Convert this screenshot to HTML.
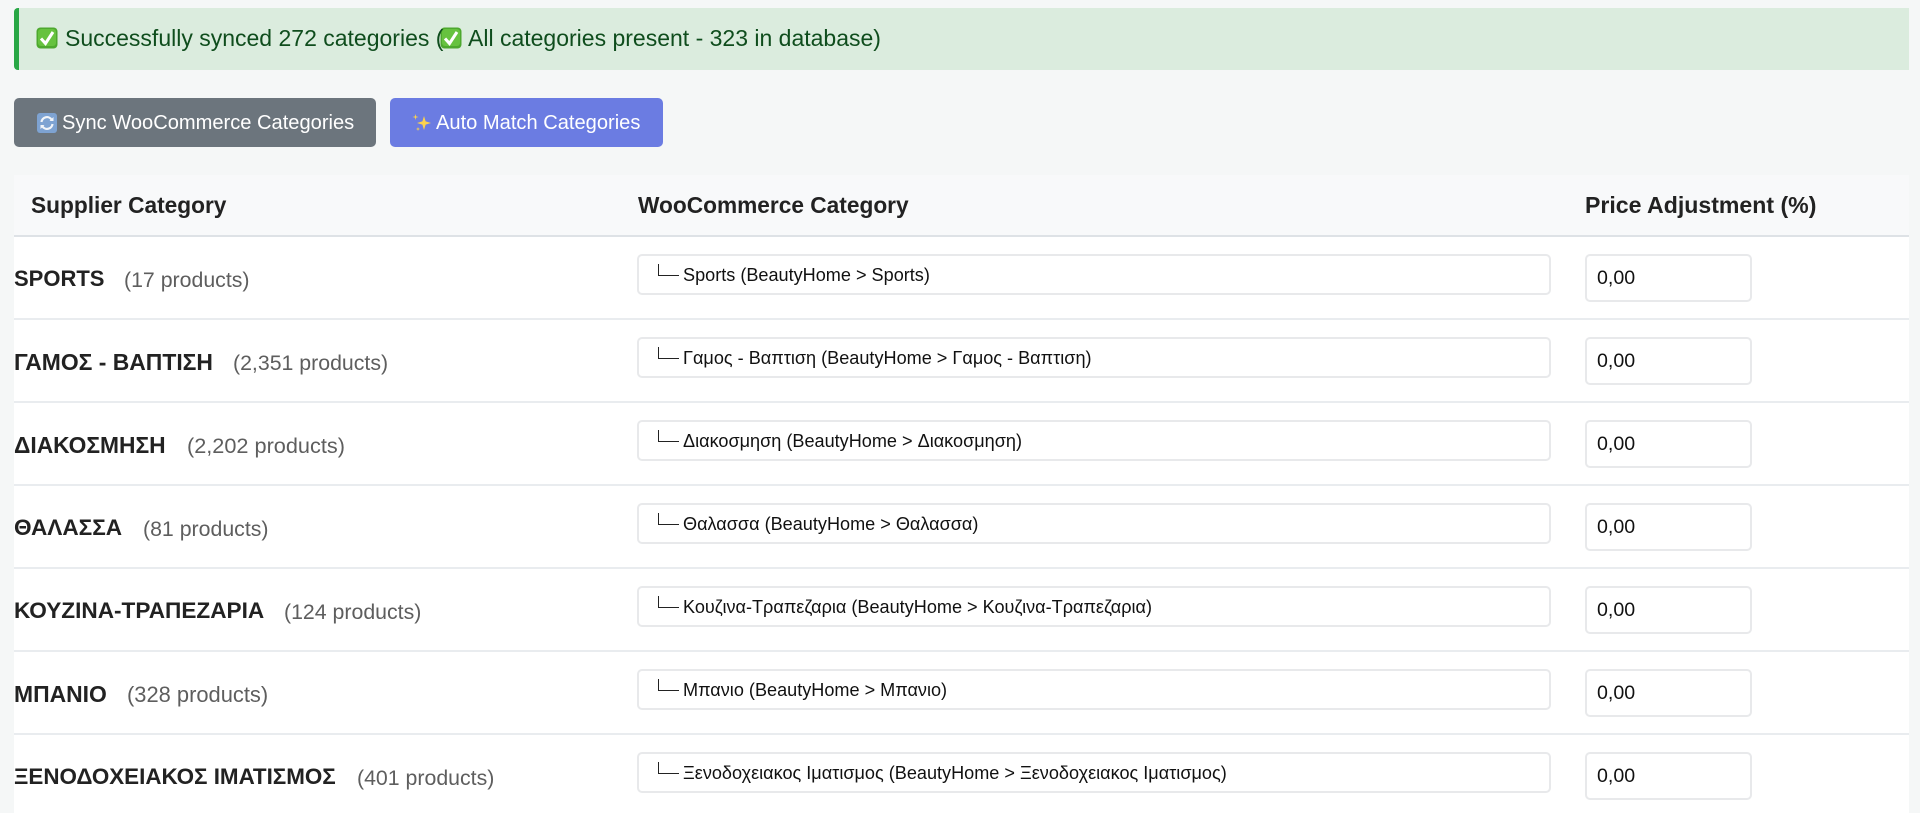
<!DOCTYPE html>
<html><head><meta charset="utf-8"><style>
html,body{margin:0;padding:0;width:1920px;height:813px;overflow:hidden;background:#f5f7f7;font-family:"Liberation Sans",sans-serif}
#page{position:absolute;left:0;top:0;width:1920px;height:813px;filter:blur(.35px)}
.a{position:absolute;white-space:nowrap}
#alert{left:14px;top:8px;width:1895px;height:62px;background:#dbecde;border-radius:4px 0 0 4px}
#bar{left:14px;top:8px;width:5px;height:62px;background:#28a745;border-radius:4px 0 0 4px}
.m{top:25px;font-size:23px;line-height:27px;color:#0f4d1d}
.btn{top:99px;height:49px;border-radius:5px;color:#fff;font-size:20.1px;line-height:49px}
.bg{top:98px}
#table{left:14px;top:175px;width:1895px;height:638px;background:#fff}
#head{left:14px;top:175px;width:1895px;height:60px;background:#f8f9fa;border-bottom:2px solid #dee2e6}
.h{top:192px;font-size:22.7px;line-height:26px;font-weight:bold;color:#222}
.row{left:14px;width:1895px;height:83px;border-bottom:2px solid #e9ecef;box-sizing:border-box}
.n{left:14px;font-size:22.6px;line-height:26px;font-weight:bold;color:#222}
.c{font-size:21.3px;line-height:26px;color:#5e5e5e}
.s{left:637px;width:910px;height:37px;border:2px solid #e8e9eb;border-radius:5px;background:#fff}
.st{left:683px;font-size:18.1px;line-height:22px;color:#111}
.tr{left:657.500px;width:21px;height:12px;border-left:1.5px solid #222;border-bottom:1.5px solid #222;box-sizing:border-box}
.i{left:1585px;width:163px;height:44px;border:2px solid #e8e9eb;border-radius:5px;background:#fff}
.v{left:1597px;font-size:19.6px;line-height:24px;color:#111}
svg{position:absolute}
</style></head><body><div id="page">
<div class="a" id="alert"></div><div class="a" id="bar"></div>
<svg style="left:36px;top:27px" width="22" height="22" viewBox="0 0 22 22"><rect x="0.5" y="0.5" width="21" height="21" rx="4" fill="#4da82e"/><rect x="2" y="2" width="18" height="17" rx="3" fill="#66c23f"/><path d="M5 11.5l4.5 5L17 5" fill="none" stroke="#fff" stroke-width="3"/></svg>
<svg style="left:440px;top:27px" width="22" height="22" viewBox="0 0 22 22"><rect x="0.5" y="0.5" width="21" height="21" rx="4" fill="#4da82e"/><rect x="2" y="2" width="18" height="17" rx="3" fill="#66c23f"/><path d="M5 11.5l4.5 5L17 5" fill="none" stroke="#fff" stroke-width="3"/></svg>
<div class="a m" style="left:65px">Successfully synced 272 categories (</div>
<div class="a m" style="left:468px">All categories present - 323 in database)</div>
<div class="a btn bg" style="left:14px;width:362px;background:#6c757d"></div>
<svg style="left:37px;top:113px" width="20" height="20" viewBox="0 0 20 20"><rect width="20" height="20" rx="3" fill="#7ea3d2"/><path d="M4.5 9a5.5 5.5 0 0 1 10-2.5M15.500 11a5.500 5.500 0 0 1-10 2.500" fill="none" stroke="#f2f5f9" stroke-width="2.200"/><path d="M16.500 4v4h-4zM3.500 16v-4h4z" fill="#f2f5f9"/></svg>
<div class="a btn" style="left:62px">Sync WooCommerce Categories</div>
<div class="a btn bg" style="left:390px;width:273px;background:#6b7ce2"></div>
<svg style="left:412px;top:113px" width="20" height="20" viewBox="0 0 20 20"><path d="M12 3l1.600 5.400L19 10l-5.400 1.600L12 17l-1.600-5.400L5 10l5.400-1.600z" fill="#fbd24e"/><path d="M3.500 1l.6 2.400L6.500 4l-2.400.6L3.500 7l-.6-2.400L.5 4l2.400-.6zM6 14l.5 1.500L8 16l-1.500.5L6 18l-.5-1.500L4 16l1.500-.5z" fill="#fbd24e"/></svg>
<div class="a btn" style="left:436px">Auto Match Categories</div>
<div class="a" id="table"></div><div class="a" id="head"></div>
<div class="a h" style="left:31px">Supplier Category</div>
<div class="a h" style="left:638px">WooCommerce Category</div>
<div class="a h" style="left:1585px;font-size:23.100px">Price Adjustment (%)</div>

<div class="a row" style="top:237px"></div>
<div class="a n" style="top:266px;font-size:22px">SPORTS</div><div class="a c" style="left:124px;top:267px">(17 products)</div>
<div class="a s" style="top:254px"></div><div class="a tr" style="top:264px"></div><div class="a st" style="top:264px">Sports (BeautyHome &gt; Sports)</div>
<div class="a i" style="top:254px"></div><div class="a v" style="top:266px">0,00</div>

<div class="a row" style="top:320px"></div>
<div class="a n" style="top:349px;font-size:22.900px">ΓΑΜΟΣ - ΒΑΠΤΙΣΗ</div><div class="a c" style="left:233px;top:350px">(2,351 products)</div>
<div class="a s" style="top:337px"></div><div class="a tr" style="top:347px"></div><div class="a st" style="top:347px">Γαμος - Βαπτιση (BeautyHome &gt; Γαμος - Βαπτιση)</div>
<div class="a i" style="top:337px"></div><div class="a v" style="top:349px">0,00</div>

<div class="a row" style="top:403px"></div>
<div class="a n" style="top:432px;font-size:22.800px">ΔΙΑΚΟΣΜΗΣΗ</div><div class="a c" style="left:187px;top:433px;font-size:21.700px">(2,202 products)</div>
<div class="a s" style="top:420px"></div><div class="a tr" style="top:430px"></div><div class="a st" style="top:430px">Διακοσμηση (BeautyHome &gt; Διακοσμηση)</div>
<div class="a i" style="top:420px"></div><div class="a v" style="top:432px">0,00</div>

<div class="a row" style="top:486px"></div>
<div class="a n" style="top:515px">ΘΑΛΑΣΣΑ</div><div class="a c" style="left:143px;top:516px">(81 products)</div>
<div class="a s" style="top:503px"></div><div class="a tr" style="top:513px"></div><div class="a st" style="top:513px">Θαλασσα (BeautyHome &gt; Θαλασσα)</div>
<div class="a i" style="top:503px"></div><div class="a v" style="top:515px">0,00</div>

<div class="a row" style="top:569px"></div>
<div class="a n" style="top:598px">ΚΟΥΖΙΝΑ-ΤΡΑΠΕΖΑΡΙΑ</div><div class="a c" style="left:284px;top:599px">(124 products)</div>
<div class="a s" style="top:586px"></div><div class="a tr" style="top:596px"></div><div class="a st" style="top:596px">Κουζινα-Τραπεζαρια (BeautyHome &gt; Κουζινα-Τραπεζαρια)</div>
<div class="a i" style="top:586px"></div><div class="a v" style="top:598px">0,00</div>

<div class="a row" style="top:652px"></div>
<div class="a n" style="top:681px;font-size:22.900px">ΜΠΑΝΙΟ</div><div class="a c" style="left:127px;top:682px;font-size:21.900px">(328 products)</div>
<div class="a s" style="top:669px"></div><div class="a tr" style="top:679px"></div><div class="a st" style="top:679px">Μπανιο (BeautyHome &gt; Μπανιο)</div>
<div class="a i" style="top:669px"></div><div class="a v" style="top:681px">0,00</div>

<div class="a n" style="top:764px;font-size:22.400px">ΞΕΝΟΔΟΧΕΙΑΚΟΣ ΙΜΑΤΙΣΜΟΣ</div><div class="a c" style="left:357px;top:765px">(401 products)</div>
<div class="a s" style="top:752px"></div><div class="a tr" style="top:762px"></div><div class="a st" style="top:762px">Ξενοδοχειακος Ιματισμος (BeautyHome &gt; Ξενοδοχειακος Ιματισμος)</div>
<div class="a i" style="top:752px"></div><div class="a v" style="top:764px">0,00</div>
</div></body></html>
